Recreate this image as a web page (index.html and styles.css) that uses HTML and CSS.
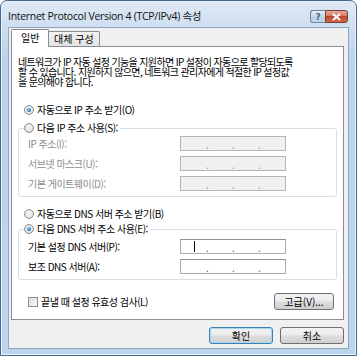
FILE: index.html
```html
<!DOCTYPE html>
<html lang="ko">
<head>
<meta charset="utf-8">
<link rel="stylesheet" href="styles.css">
</head>
<body>
<div class="window">
  <div class="titlebar">
    <span class="title">Internet Protocol Version 4 (TCP/IPv4) 속성</span>
    <div class="caption-btns">
      <span class="cbtn help">?</span>
      <span class="cbtn close"><svg width="9" height="8" viewBox="0 0 9 8"><path d="M1 1 L8 7 M8 1 L1 7" stroke="#fff" stroke-width="2"/></svg></span>
    </div>
  </div>
  <div class="client">
    <div class="tabs">
      <span class="tab active">일반</span>
      <span class="tab">대체 구성</span>
    </div>
    <div class="panel">
      <p class="desc">네트워크가 IP 자동 설정 기능을 지원하면 IP 설정이 자동으로 할당되도록<br>할 수 있습니다. 지원하지 않으면, 네트워크 관리자에게 적절한 IP 설정값<br>을 문의해야 합니다.</p>
      <div class="opt"><span class="radio on"></span>자동으로 IP 주소 받기(O)</div>
      <fieldset class="group g1">
        <legend class="opt"><span class="radio"></span>다음 IP 주소 사용(S):</legend>
        <div class="row off"><span class="lbl">IP 주소(I):</span><span class="ipbox dis"><i>.</i><i>.</i><i>.</i></span></div>
        <div class="row off"><span class="lbl">서브넷 마스크(U):</span><span class="ipbox dis"><i>.</i><i>.</i><i>.</i></span></div>
        <div class="row off"><span class="lbl">기본 게이트웨이(D):</span><span class="ipbox dis"><i>.</i><i>.</i><i>.</i></span></div>
      </fieldset>
      <div class="opt o3"><span class="radio"></span>자동으로 DNS 서버 주소 받기(B)</div>
      <fieldset class="group g2">
        <legend class="opt"><span class="radio on"></span>다음 DNS 서버 주소 사용(E):</legend>
        <div class="row"><span class="lbl">기본 설정 DNS 서버(P):</span><span class="ipbox"><b class="caret"></b><i>.</i><i>.</i><i>.</i></span></div>
        <div class="row"><span class="lbl">보조 DNS 서버(A):</span><span class="ipbox"><i>.</i><i>.</i><i>.</i></span></div>
      </fieldset>
      <div class="bottom-row">
        <div class="chkrow"><span class="check"></span>끝낼 때 설정 유효성 검사(L)</div>
        <span class="btn adv">고급(V)...</span>
      </div>
    </div>
    <div class="actions">
      <span class="btn default">확인</span>
      <span class="btn">취소</span>
    </div>
  </div>
</div>
</body>
</html>
```
FILE: styles.css
```css
html, body { margin: 0; padding: 0; background: #ffffff; }
body { font-family: "Noto Sans CJK KR", "Noto Sans", sans-serif; font-size: 10px; color: #000; }

.window {
  width: 357px; height: 356px; box-sizing: border-box;
  display: flex; flex-direction: column;
  border: 1px solid #47698f; border-radius: 7px 7px 0 0;
  background: linear-gradient(180deg, #dfe9f5 0px, #cfdff0 26px, #bcd3ec 60px, #bdd4ed 100%);
  box-shadow: inset 0 0 0 1px #e8f1fa;
}
.titlebar {
  height: 26px; display: flex; align-items: flex-start; justify-content: space-between;
  padding-left: 7px;
}
.title {
  font-family: "Open Sans", "Noto Sans CJK KR", sans-serif; font-size: 10.5px; line-height: 12px;
  margin-top: 9px; letter-spacing: -0.3px; color: #111;
}
.caption-btns { display: flex; margin-top: 9px; margin-right: 8px; }
.cbtn {
  height: 13px; box-sizing: border-box; border: 1px solid #6c86a4; display: flex; align-items: center; justify-content: center;
}
.help {
  width: 15px; border-radius: 3px 0 0 3px; border-right: none;
  background: linear-gradient(180deg, #e3ecf6 0, #c8d7e8 50%, #b4c8de 51%, #c5d8ec 100%);
  color: #4b6684; font: bold 9px "DejaVu Sans", sans-serif;
}
.close {
  width: 23px; border-radius: 0 3px 3px 0; border-color: #7a3a33;
  background: linear-gradient(180deg, #e9a99d 0, #d47866 45%, #c0452f 50%, #d16a4c 100%);
}

.client {
  flex: 1; margin: 0 7px 6px 7px; background: #f0f0f0;
  border: 1px solid #8fa7c3;
  padding: 1px 4px 0 2px; display: flex; flex-direction: column;
}
.tabs { display: flex; align-items: flex-end; height: 17px; padding-left: 0; position: relative; z-index: 1; }
.tab {
  box-sizing: border-box; height: 15px; border: 1px solid #898c95; border-bottom: none;
  background: linear-gradient(180deg, #f2f2f2, #e3e3e3); padding: 0 5px; line-height: 13px; margin-left: -1px;
  border-radius: 2px 2px 0 0;
}
.tab.active {
  height: 18px; background: #fff; margin-bottom: -1px; padding: 0 8px 0 9px; margin-left: 0; line-height: 15px; width: 38px; box-sizing: border-box;
}
.tab.active + .tab { margin-left: -1px; }

.panel {
  background: #fff; border: 1px solid #898c95; height: 274px; box-sizing: border-box;
  padding: 10px 6px 0 6px;
}
.desc { margin: 0; line-height: 10px; letter-spacing: -0.65px; white-space: nowrap; }
.opt { display: flex; align-items: center; height: 14px; line-height: 14px; }
.panel > .opt { margin: 16px 0 0 6px; }
.radio {
  width: 10px; height: 10px; box-sizing: border-box; border-radius: 50%; margin-right: 3px;
  border: 1px solid #8e8f8f;
  background: radial-gradient(circle at 50% 40%, #f7f7f7 0, #e0e0e0 70%, #d6d6d6 100%);
  position: relative; flex: none;
}
.radio.on::after {
  content: ""; position: absolute; left: 2px; top: 2px; width: 4px; height: 4px; border-radius: 50%;
  background: radial-gradient(circle at 40% 35%, #8fd0f8 0, #2a7cc0 60%, #1b5a96 100%);
}
.opt, .row, .chkrow { letter-spacing: -0.5px; }

.group {
  margin: 4px 0 0 0; padding: 1px 0 5px 0; border: 1px solid #d5dfe5; border-radius: 3px; min-width: 0;
}
.group legend { padding: 0 2px 0 0; margin-left: 5px; }
.row { display: flex; align-items: center; height: 15px; padding-left: 9px; }
.row + .row { margin-top: 5px; }
.row.off { color: #8d8d8d; }
.lbl { width: 152px; }
.ipbox {
  width: 106px; height: 15px; box-sizing: border-box; border: 1px solid #abadb3; border-top-color: #8f9196;
  background: #fff; display: flex; align-items: flex-end; padding-left: 25px; position: relative;
}
.ipbox.dis { background: #f0f0f0; border-color: #b5b5b5; }
.ipbox i { font-style: normal; width: 26px; line-height: 10px; font-size: 10px; color: #6a6a6a; }
.ipbox.dis i { color: #9a9a9a; }
.caret { position: absolute; left: 13px; top: 1px; width: 1px; height: 11px; background: #000; }

.o3 { margin-top: 10px !important; }
.g2 { margin-top: 1px; padding-top: 3px; }

.bottom-row { display: flex; justify-content: space-between; align-items: center; margin-top: 13px; padding-right: 3px; }
.chkrow { display: flex; align-items: center; padding-left: 10px; }
.check {
  width: 10px; height: 10px; box-sizing: border-box; border: 1px solid #8e8f8f; margin-right: 3px;
  background: linear-gradient(135deg, #dcdcdc, #f7f7f7);
}
.btn {
  box-sizing: border-box; height: 17px; display: inline-flex; align-items: center; justify-content: center;
  border: 1px solid #707070; border-radius: 3px;
  background: linear-gradient(180deg, #f2f2f2 0, #ebebeb 48%, #dddddd 52%, #cfcfcf 100%);
  font-size: 10px;
}
.adv { width: 60px; }
.actions { display: flex; justify-content: flex-end; gap: 7px; margin-top: 7px; }
.actions .btn { width: 64px; }
.btn.default { border-color: #3c7fb1; box-shadow: inset 0 0 0 1px #a6d8f5; }
```
